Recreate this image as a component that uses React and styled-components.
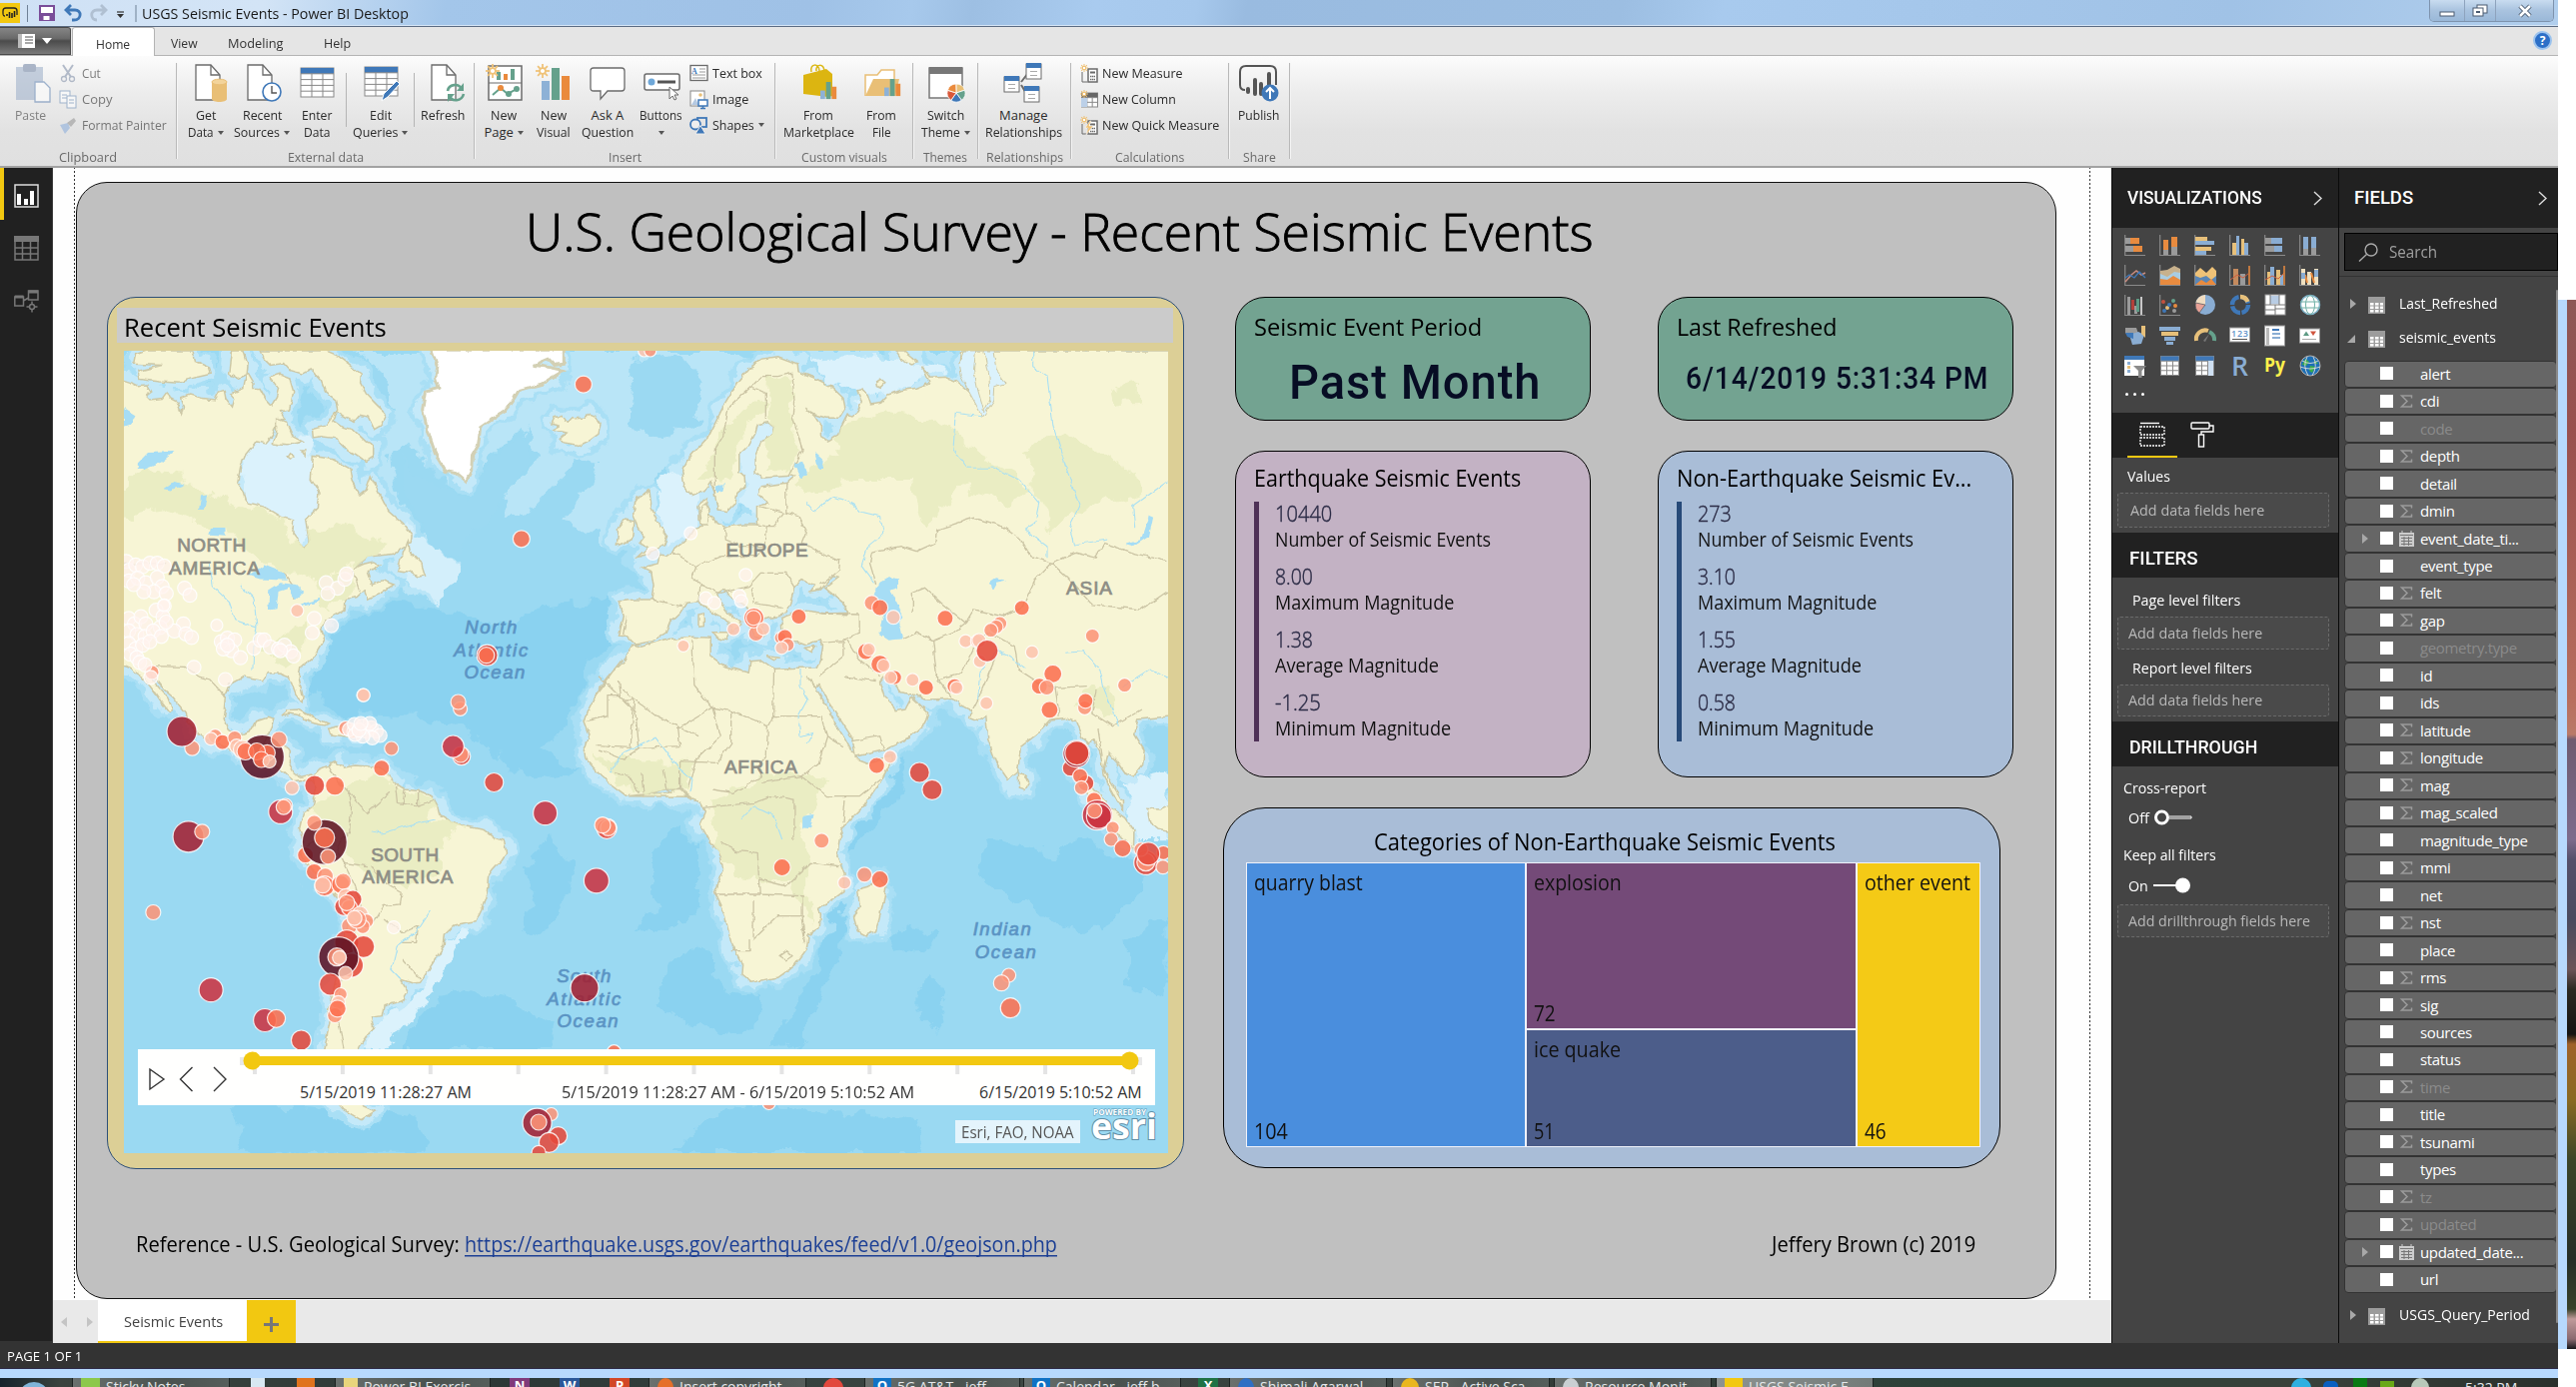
import React, { useLayoutEffect, useRef, useState } from 'react';
import styled, { createGlobalStyle } from 'styled-components';

const UI = '"Open Sans", "Noto Sans", sans-serif';
const DIN = 'Roboto, "Open Sans", sans-serif';

const Global = createGlobalStyle`
  *, *::before, *::after { box-sizing: border-box; }
  body { margin: 0; background: #fff; font-family: ${UI}; color: #222; overflow: hidden; }
  svg { display: block; flex: none; overflow: visible; }
`;

/* ---------- text fitted to a column width ---------- */
const FitBox = styled.span`
  display: block;
  flex: none;
  width: ${p => p.$w}px;
  white-space: nowrap;
`;
const FitInner = styled.span`
  display: inline-block;
  transform-origin: 0 50%;
`;
function Fit({ w, children }) {
  const ref = useRef(null);
  const [k, setK] = useState(1);
  useLayoutEffect(() => {
    if (ref.current && ref.current.offsetWidth) setK(w / ref.current.offsetWidth);
  }, [w]);
  return <FitBox $w={w}><FitInner ref={ref} style={{ transform: `scaleX(${k})` }}>{children}</FitInner></FitBox>;
}

/* ---------- frame ---------- */
const Desktop = styled.div`display: flex; width: 2578px; height: 1388px; background: #fff;`;
const Win = styled.div`display: flex; flex-direction: column; width: 2560px; height: 1388px;`;
const Edge = styled.div`
  width: 18px; height: 1050px; margin-top: 300px; border-left: 9px solid #b7d9fd;
  background: linear-gradient(#8e5856 0, #99504e 130px, #b86e5e 400px, #b97a68 435px, #6f5b70 440px, #7d6c8c 540px, #55506a 560px, #4a4a5e 620px, #6b5458 670px, #2c2a22 690px, #151412 735px, #a0622a 745px, #8a6a22 800px, #3c4628 860px, #262e26 960px, #39422a 1010px, #c09a9a 1020px, #8a6a70 1040px, #15161a 1050px);
`;

/* ---------- title bar ---------- */
const TitleBar = styled.header`
  display: flex; align-items: center; height: 27px; flex: none;
  border-bottom: 1px solid #5b6b82;
  box-shadow: inset 0 -1px 0 #d6e6f7;
  background: linear-gradient(100deg, #cfe1f5 0, #d3e4f6 260px, #a3c6ea 440px, #9fc1e6 800px, #a7c9ec 900px, #9dbfe3 960px, #a9cbef 1080px, #a6c8ec 1180px, #99bbe0 1230px, #9cbee2 1600px, #a8caee 1700px, #a0c2e6 2200px, #b3d0ee 2560px);
  font-size: 15px; color: #1a1a1a;
`;
const Caption = styled.div`display: flex; margin-left: 5px; line-height: 25px;`;
const WinButtons = styled.div`
  display: flex; margin-left: auto; margin-right: 4px; align-self: flex-start; height: 22px;
  border: 1px solid #7e93ad; border-top: 0; border-radius: 0 0 5px 5px; overflow: hidden;
`;
const WinButton = styled.div`
  display: flex; align-items: center; justify-content: center;
  width: ${p => p.$w}px; height: 100%;
  border-left: ${p => (p.$first ? 0 : '1px solid #8ea3bd')};
  background: linear-gradient(#c9dcf0, #a9c3df 50%, #9ab8d8);
`;

/* ---------- tab strip ---------- */
const TabStrip = styled.nav`
  display: flex; height: 29px; flex: none; background: #e5e5e5; border-bottom: 1px solid #b4b4b4; font-size: 13.5px; line-height: 32px; color: #333;
`;
const FileButton = styled.div`
  display: flex; align-items: center; gap: 6px; padding: 0 0 0 17px; width: 71px; height: 28px; border-radius: 0 3px 0 0;
  background: linear-gradient(#858585, #6a6a6a 40%, #4b4b4b 50%, #7a7a7a);
  border: 1px solid #4a4a4a; border-left: 0;
`;
const HomeTab = styled.div`
  width: 83px; height: 30px; margin-left: 1px; padding-left: 23px; background: #fff; border: 1px solid #b4b4b4; border-bottom: 0; border-radius: 3px 3px 0 0;
`;
const Tab = styled.div`margin-left: ${p => p.$ml}px;`;
const HelpDot = styled.div`
  margin: 4px 6px 0 auto; width: 19px; height: 19px; border-radius: 50%; background: #2c6fc7; border: 2px solid #9cc3ee; color: #fff; font: bold 12px/15px ${UI}; text-align: center;
`;

/* ---------- ribbon ---------- */
const Ribbon = styled.section`
  display: flex; height: 112px; flex: none; padding-top: 7px;
  background: linear-gradient(#fcfcfc, #ededed 35px, #e2e2e2 75px, #e0e0e0);
  border-bottom: 2px solid #a2a2a2; font-size: 13px; color: #2b2b2b;
`;
const Group = styled.div`
  display: flex; flex-direction: column; width: ${p => p.$w}px; height: 96px; border-right: 1px solid #b9b9b9; box-shadow: 1px 0 0 #f4f4f4;
`;
const GroupBody = styled.div`display: flex; flex: none; height: 83px; padding-left: ${p => p.$pl || 0}px;`;
const GroupLabel = styled.div`display: flex; justify-content: center; line-height: 22px; color: #6a6a6a;`;
const BigBtn = styled.div`
  display: flex; flex-direction: column; align-items: center; width: ${p => p.$w}px; line-height: 17px; opacity: ${p => (p.$off ? 0.55 : 1)};
`;
const BigIcon = styled.div`display: flex; align-items: center; justify-content: center; width: 40px; height: 40px; margin-bottom: 4px;`;
const Line = styled.div`display: flex; align-items: center; gap: 4px; height: 17px;`;
const Caret = styled.i`border: 3px solid transparent; border-top: 4px solid #555; border-bottom: 0;`;
const Rule = styled.div`width: 1px; height: 54px; margin-top: 10px; background: #b5b5b5;`;
const SmallCol = styled.div`display: flex; flex-direction: column; margin-left: ${p => p.$ml}px;`;
const SmallBtn = styled.div`display: flex; align-items: center; gap: 4px; height: 26px; margin-top: ${p => (p.$first ? '-3px' : 0)}; opacity: ${p => (p.$off ? 0.6 : 1)};`;

/* ---------- workspace ---------- */
const Work = styled.main`display: flex; height: 1176px; flex: none;`;
const NavRail = styled.aside`
  display: flex; flex-direction: column; align-items: center; width: 53px; background: #212121; padding-top: 16px; gap: 28px;
  border-right: 1px solid #3a3a3a; box-shadow: inset 0 -2px 0 #333;
`;
const RailItem = styled.div`
  display: flex; justify-content: center; width: 100%; padding-left: 1px; position: relative;
  &::before { content: ''; display: ${p => (p.$on ? 'block' : 'none')}; position: absolute; left: 0; top: -16px; width: 4px; height: 52px; background: #f2c811; }
`;
const Center = styled.div`display: flex; flex-direction: column; width: 2060px;`;
const Canvas = styled.div`display: flex; height: 1133px; padding-left: 21px; background: #fefefe;`;
const PageGuide = styled.div`
  width: 2018px; height: 1133px; display: flex; align-items: flex-start; padding: 14px 0 0 0.5px;
  border-left: 1px dashed #444; border-right: 1px dashed #444;
  border-image: repeating-linear-gradient(#333 0 2px, transparent 2px 4px) 1;
`;
const Report = styled.div`
  width: 1982px; height: 1118px; background: #c0c0c0; border: 1.5px solid #111; border-radius: 31px; color: #000;
`;
const ReportTitle = styled.h1`margin: 0; padding: 10px 0 0 449px; font-weight: 300; font-size: 51px; line-height: 76px; height: 114px; -webkit-text-stroke: 0.9px #000;`;
const ReportBody = styled.div`display: flex; height: 872px;`;
const MapCard = styled.section`
  width: 1078px; height: 873px; margin-left: 30px; padding: 9.5px; background: #dccf96; border: 1.5px solid #2d4f78; border-radius: 29px;
`;
const MapTitle = styled.div`height: 35px; margin-bottom: 8px; padding-left: 7px; background: #cbcbcb; font-size: 25.5px; line-height: 38px;`;
const MapFrame = styled.div`position: relative; width: 1045px; height: 803px; margin-left: 7px; overflow: hidden;`;
const Player = styled.div`
  position: absolute; left: 14px; top: 699px; width: 1018px; height: 56px; background: #fffffe; font-size: 16px; color: #333;
`;
const PlayerTimes = styled.div`display: flex; padding-left: 162px; margin-top: -24px; line-height: 22px;`;
const Gap = styled.div`width: ${p => p.$w}px; flex: none;`;
const Attribution = styled.div`
  position: absolute; right: 88px; bottom: 10px; width: 125px; height: 23px; padding-left: 6px; background: #e4f4fc; font-size: 15.5px; line-height: 24px; color: #555;
`;
const Credit = styled.div`position: absolute; right: 9px; bottom: 11px; width: 70px; height: 36px;`;
const Side = styled.div`display: flex; flex-direction: column; width: 792px; margin-left: 39px;`;
const CardRow = styled.div`display: flex; gap: 67px; margin-left: 12px; margin-bottom: 30px;`;
const Card = styled.section`
  width: 356px; height: ${p => p.$h}px; background: ${p => p.$bg}; border: 1.3px solid #000; border-radius: 30px; padding: ${p => p.$pt}px 18px 0; overflow: hidden;
`;
const CardTitle = styled.div`font-size: ${p => p.$s}px; line-height: 32px; height: 32px;`;
const CardValue = styled.div`
  display: flex; padding-left: ${p => p.$pl}px; font-family: ${DIN}; font-weight: 500; color: #070d24; font-size: ${p => p.$s}px; line-height: ${p => p.$lh}px; letter-spacing: 1px;
`;
const Stats = styled.div`margin-top: 8px; height: 240px; border-left: 5px solid ${p => p.$c}; padding-left: 16px;`;
const Stat = styled.div`height: 63.1px; &:first-child { margin-top: 0; } position: relative; top: -1px;`;
const StatValue = styled.div`font-size: 21.5px; line-height: 26px; color: #2b2b45; font-weight: 300; -webkit-text-stroke: .4px #2b2b45;`;
const StatLabel = styled.div`font-size: 19.5px; line-height: 26px; color: #111;`;
const TreeCard = styled.section`
  width: 778px; height: 361px; padding: 18px 0 0 22.5px; background: #a9bdd7; border: 1.3px solid #000; border-radius: 42px; font-size: 21.5px;
`;
const TreeTitle = styled.div`padding-left: 128px; height: 36px; line-height: 30px; font-size: 23px;`;
const Tree = styled.div`
  display: grid; width: 735px; height: 285px; grid-template-columns: 278px 329px 1fr; grid-template-rows: 165px 1fr; gap: 2px; padding: 1px; background: #f0f2fa;
`;
const Cell = styled.div`
  display: flex; flex-direction: column; justify-content: space-between; padding: 4px 0 0 7px; background: ${p => p.$c}; grid-row: ${p => (p.$tall ? 'span 2' : 'auto')}; line-height: 30px; color: #111;
`;
const Foot = styled.footer`display: flex; align-items: center; padding: 0 0 0 59px; margin-top: 58px; font-size: 21.5px; line-height: 36px;`;
const Link = styled.a`display: block; color: #1c3f94; background: linear-gradient(#1c3f94, #1c3f94) 0 29px / 100% 1.5px no-repeat;`;
const PageBar = styled.div`display: flex; height: 43px; background: #e9e9e9; font-size: 15px; color: #444;`;
const PageArrows = styled.div`display: flex; align-items: center; gap: 20px; width: 45px; padding-left: 8px;`;
const Tri = styled.i`
  display: block; width: 0; height: 0; border: ${p => p.$s || 5}px solid transparent;
  border-${p => (p.$left ? 'right' : 'left')}: ${p => (p.$s || 5) + 1}px solid ${p => p.$c};
  border-${p => (p.$left ? 'left' : 'right')}: 0;
`;
const PageTab = styled.div`width: 149px; padding-left: 26px; background: #fff; border-bottom: 2px solid #f2c811; line-height: 43px;`;
const AddPage = styled.div`display: flex; align-items: center; justify-content: center; width: 49px; background: #f2c811; padding-top: 5px;`;

/* ---------- side panes ---------- */
const Pane = styled.aside`width: ${p => p.$w}px; background: #444; border-left: 1px solid #0a0a0a; color: #fff; font-size: 15px; overflow: hidden; flex: none;`;
const PaneHead = styled.div`
  display: flex; align-items: center; justify-content: space-between; height: 60px; padding: 0 ${p => p.$pr}px 0 15px; background: #212121; font: 500 18.5px ${DIN};
`;
const SubHead = styled.div`height: 45px; padding: 4px 0 0 17px; background: #212121; font: 500 18.5px/45px ${DIN};`;
const IconGrid = styled.div`display: grid; grid-template-columns: repeat(6, 35px); grid-auto-rows: 30.2px; padding: 7px 0 0 12px; height: 156px;`;
const More = styled.div`display: flex; gap: 5px; padding: 9px 0 0 13px; height: 29px; i { width: 3px; height: 3px; border-radius: 50%; background: #fff; }`;
const WellTabs = styled.div`display: flex; height: 45px; padding-left: 15px; background: #212121;`;
const WellTab = styled.div`display: flex; justify-content: center; padding-top: 9px; width: 50px; border-bottom: 2px solid ${p => (p.$on ? '#f2c811' : 'transparent')};`;
const PaneLabel = styled.div`display: flex; align-items: center; height: ${p => p.$h}px; padding: ${p => p.$pt || 0}px 0 0 ${p => p.$pl}px; gap: 5px;`;
const Well = styled.div`
  width: 212px; height: ${p => p.$h}px; margin: 0 0 ${p => p.$mb || 0}px 5px; padding-left: ${p => p.$pl}px; border: 1px dashed #6a6a6a; border-radius: 3px; background: #4a4a4a; color: #b9b9b9; line-height: ${p => p.$h - 3}px;
`;
const Search = styled.div`display: flex; align-items: center; gap: 11px; height: 38px; margin: 5px 0 5px 5px; padding-left: 14px; background: #212121; border: 1px solid #000; color: #a0a0a0; font-size: 15.5px;`;
const FieldsBody = styled.div`position: relative; border-top: 1px solid #333; height: 1066px; padding-top: 10px;`;
const Thumb = styled.div`position: absolute; right: 0; top: 13px; width: 2px; height: 1034px; border-radius: 1px; background: #8a8a8a;`;
const TableRow = styled.div`display: flex; align-items: center; height: 34px; padding-left: 11px; line-height: 20px; svg { margin: 2px 14px 0 10px; } > span { margin-top: -2px; }`;
const TableArrow = styled.div`width: 8px; display: flex; margin-left: ${p => (p.$open ? '-3px' : 0)}; margin-right: ${p => (p.$open ? '3px' : 0)}; svg { margin: 2px 0 0; }`;
const FieldList = styled.div`margin: 5.5px 0 5px 5px; width: 213px;`;
const Field = styled.div`
  display: flex; align-items: center; height: 27.48px; padding: 0 0 1px 17px; background: #666; border: 1px solid #333; border-radius: 4px; color: ${p => (p.$dim ? '#8b8b8b' : '#fff')}; letter-spacing: -0.35px; line-height: 24px;
`;
const FieldArrow = styled.div`width: 18px;`;
const Box = styled.div`width: 13px; height: 13px; background: #fff;`;
const Kind = styled.div`width: 27px; padding-left: 7px;`;

/* ---------- status + taskbar ---------- */
const Status = styled.div`height: 26px; flex: none; padding-left: 7px; background: #333; border-bottom: 1px solid #2e2a45; color: #fff; font-size: 13.5px; line-height: 26px;`;
const Glass = styled.div`height: 9px; flex: none; background: #b7d9fd;`;
const Taskbar = styled.div`
  display: flex; height: 9px; flex: none; overflow: hidden; align-items: flex-start; color: #e4e8ea; font-size: 14px;
  background: linear-gradient(90deg, #16232c, #3a433e 60px, #2c3836 500px, #3d4844 1000px, #343c38 1500px, #2c4239 2000px, #39423b 2300px, #2a302c);
`;
const Task = styled.div`
  display: flex; gap: 6px; width: ${p => p.$w}px; height: 24px; flex: none; padding-left: 8px; margin-left: ${p => p.$ml || 0}px;
  border: 1px solid ${p => (p.$plain ? 'transparent' : '#1c2321')}; border-top: 0;
  background: ${p => (p.$plain ? 'none' : p.$on ? 'linear-gradient(90deg,#8d9391,#737b78)' : 'linear-gradient(90deg,#6a716e,#4a524f 60%,#565e5b)')};
  line-height: 17px; white-space: nowrap; overflow: hidden;
`;
const Chip = styled.i`
  width: ${p => p.$w || 20}px; height: 20px; margin: ${p => p.$mt || 0}px 0 0 ${p => p.$ml || 0}px; flex: none;
  background: ${p => p.$c}; border-radius: ${p => p.$r || 0}; color: #fff; font: bold 13px/14px ${UI}; text-align: center;
`;

/* ---------- map ---------- */
const TILES = { a: [0, 160, 2.45, 2.8], b: [600, 340, 2.45, 3], c: [100, 660, 2.613, 3], d: [600, 800, 2.45, 3] };
const at = (t, x, y) => [TILES[t][0] + x / TILES[t][2], TILES[t][1] + y / TILES[t][3]];
const pts = (t, s) => s.trim().split(/\s+/).map(p => {
  const [x, y] = p.split(',').map(Number);
  return at(t, x, y).map(v => v.toFixed(1)).join(' ');
});
const shape = (...parts) => 'M' + parts.flatMap(([t, s]) => pts(t, s)).join('L') + 'Z';
const line = (t, s) => 'M' + pts(t, s).join('L');

const LAND = [
  shape(['a', '290,612 306,617 330,626 340,632 362,630 372,650 360,660 370,672 400,668 412,650 420,668 436,678 447,712 452,690 445,668 470,658 500,668 530,672 540,650 552,645 556,668 572,692 578,668 568,655 600,640 607,590 625,625 622,640 640,640 655,672 668,688 680,665 685,640 665,610 690,600 712,610 722,650 712,700 690,705 700,725 680,735 670,775 655,795 630,790 605,825 592,860 585,905 600,930 608,960 650,972 690,1000 722,1010 720,1045 735,1068 748,1088 760,1070 752,1010 780,975 784,930 765,895 770,830 800,835 820,840 860,865 865,900 885,938 900,925 912,885 930,930 955,985 990,1020 1012,1050 1010,1075 965,1105 905,1112 870,1145 895,1132 920,1125 935,1135 905,1155 915,1190 940,1178 968,1190 935,1215 905,1230 898,1205 880,1225 850,1230 848,1260 810,1285 790,1310 798,1345 775,1390 740,1420 735,1450 745,1500 742,1520 728,1500 712,1450 690,1440 660,1438 650,1458 600,1448 565,1470 555,1500 552,1540'],
    ['c', '332,150 327,175 340,210 355,226 378,222 400,212 412,185 440,175 457,180 450,205 442,232 470,250 493,262 500,275 497,310 510,340 530,352 555,345 568,355 565,372 540,360 510,365 490,345 475,330 455,315 430,300 400,290 370,285 330,262 290,245 255,218 233,190 228,162 212,140 195,115 170,90 150,60 137,45 140,62 165,95 180,115 192,150 183,157 165,130 150,105 130,75 112,52 95,40 80,25 50,10']),
  shape(['c', '560,352 575,330 600,318 620,308 640,325 670,318 700,320 735,325 760,350 780,375 800,390 840,395 870,410 885,440 890,465 920,485 960,500 1010,512 1035,535 1060,545 1065,580 1050,605 1030,630 1018,650 1015,700 1000,750 985,785 960,790 930,798 905,825 902,860 885,890 860,935 840,970 820,972 790,960 800,980 808,1000 795,1025 745,1040 740,1070 712,1075 718,1105 690,1150 680,1165 668,1200 640,1250 640,1290 690,1340 722,1356 685,1382 640,1352 610,1310 592,1250 590,1170 598,1120 605,1080 600,1050 612,1000 620,960 630,900 640,850 650,800 650,760 622,715 590,672 565,640 540,610 525,575 535,545 524,510 530,480 535,460 560,440 566,400']),
  shape(['a', '1355,740 1375,745 1360,755 1392,765 1375,782 1385,795 1420,802 1450,785 1470,768 1475,740 1462,718 1450,712 1435,722 1405,725 1395,738 1380,715 1362,722']),
  shape(['a', '640,535 650,558 665,575 700,570 715,590 745,600 765,588 790,620 800,650 825,672 830,700 818,730 840,748 868,755 900,790 918,800 918,832 900,845 875,825 850,810 825,780 790,775 770,778 768,755 800,745 812,725 826,705 870,735 885,715 905,720 920,755 940,742 950,712 925,685 900,655 886,625 888,600 862,575 832,550 800,535']),
  shape(['a', '360,535 335,545 330,572 400,575 340,592 345,615 395,622 440,625 480,610 520,600 515,582 482,565 475,535']),
  shape(['a', '572,535 565,602 585,612 608,600 610,575 600,535']),
  shape(['a', '680,725 705,735 720,775 745,790 705,800 688,798 672,795 680,765']),
  shape(['a', '1003,1068 1008,1098 1035,1128 1045,1165 1025,1168 1008,1155 978,1150 985,1118']),
  shape(['a', '712,820 725,832 715,838 706,830']), shape(['a', '740,812 752,812 748,828']),
  shape(['c', '478,168 495,152 520,150 550,168 600,192 590,198 555,190 525,168 500,162']),
  shape(['c', '600,208 630,200 680,212 685,232 640,230 605,225']),
  shape(['b', '1410,33 888,33 885,70 900,100 908,155 880,125 850,112 815,115 805,95 795,80 812,130 780,145 740,152 710,165 690,190 668,195 660,165 648,150 635,155 645,185 635,215 622,228 610,225 595,262 590,285 565,305 545,290 545,258 530,230 508,205 530,225 560,235 590,235 605,205 600,175 570,140 530,115 490,95 488,72 440,50 400,58 370,85 340,130 310,190 290,240 270,290 240,330 215,365 205,390 210,440 230,470 260,455 275,428 285,460 292,510 315,515 335,490 340,460 360,440 358,410 345,395 345,345 370,315 385,280 390,255 415,248 430,262 425,285 395,310 385,350 385,400 400,415 450,410 480,408 460,430 430,435 400,440 392,465 415,490 400,492 388,500 388,555 355,555 310,562 290,552 278,530 262,525 268,480 258,478 245,500 245,540 255,562 232,570 222,590 210,605 180,635 165,648 150,645 145,672 105,685 130,700 135,740 130,780 90,780 52,785 62,830 50,890 68,888 90,915 130,905 165,880 175,850 200,820 215,790 245,785 262,800 285,825 315,845 328,862 325,880 338,865 352,855 320,822 300,790 290,760 305,748 330,778 365,805 372,830 372,860 385,895 400,900 410,880 400,860 405,840 440,830 458,822 462,810 470,790 480,740 500,722 530,738 520,755 545,750 575,710 588,715 555,745 600,790 612,820 560,822 500,812 470,825 448,835 450,865 462,905 490,905 510,915 545,900 550,920 545,960 535,985 490,985 430,988 400,962 372,965 368,1000 310,980 275,950 275,895 230,892 160,900 105,922 80,915 62,965 30,1005 0,1050'],
    ['c', '1368,0 1330,60 1300,105 1280,150 1270,185 1283,225 1270,270 1275,300 1305,340 1340,375 1380,410 1430,405 1480,390 1520,388 1545,412'],
    ['b', '70,1370 110,1365 170,1360 200,1345 220,1375 250,1390 262,1420 250,1455 275,1510 295,1535'],
    ['d', '300,170 305,210 283,280 310,350 325,430 352,495 350,525 375,550 410,540 440,535 480,500 510,450 515,405 542,385 545,345 540,325 575,298 600,275 603,225 585,170 592,110'],
    ['b', '605,1455 655,1395 690,1330 718,1265 720,1248 660,1270 640,1260 620,1235 605,1200 580,1150 555,1090 530,1040 510,1010 535,1045 540,1035 560,1080 595,1145 622,1195 630,1252 700,1232 760,1198 800,1150 808,1120 780,1085 768,1072 752,1110 728,1115 722,1095 700,1070 690,1030 700,1012 722,1030 740,1058 770,1065 800,1080 870,1078 885,1095 915,1115 910,1135 930,1145 950,1130 955,1200 975,1270 1005,1322 1028,1298 1035,1222 1080,1180 1110,1140 1150,1135 1170,1145 1185,1195 1200,1212 1218,1200 1235,1260 1240,1310 1268,1375 1285,1412 1285,1385 1250,1315 1240,1290 1250,1240 1270,1265 1290,1300 1310,1312 1335,1272 1338,1230 1315,1185 1322,1140 1365,1135 1410,1130']),
  shape(['b', '98,475 125,450 130,505 150,560 168,590 160,618 125,640 92,655 120,625 100,612 112,592 95,560 85,520 90,490']),
  shape(['b', '48,565 65,540 88,545 85,598 45,618']),
  shape(['b', '728,33 740,55 765,72 782,66 755,40 750,33']),
  shape(['b', '680,125 692,115 705,128 692,145 682,140']),
  shape(['b', '1030,1300 1045,1305 1055,1330 1045,1350 1030,1345']),
  shape(['b', '280,878 320,878 312,902 290,895']), shape(['b', '245,825 258,822 258,860 245,862']),
  shape(['b', '505,925 530,920 520,938']), shape(['b', '412,950 445,955 430,962']),
  shape(['b', '1178,1312 1205,1330 1250,1400 1290,1435 1313,1475 1312,1530 1285,1500 1240,1440 1200,1370']),
  shape(['b', '1410,1390 1375,1410 1345,1408 1352,1450 1372,1470 1410,1480']),
  shape(['d', '636,270 660,262 690,235 705,265 700,300 680,395 655,408 635,395 626,355 640,320']),
  shape(['b', '247,520 262,490 272,510 268,555 250,555'])
];
const ICE = shape(['a', '1060,530 1075,580 1070,610 1078,640 1045,650 1038,700 1048,745 1060,790 1072,830 1095,872 1120,878 1145,902 1158,870 1160,830 1175,800 1180,750 1215,722 1240,705 1265,665 1275,645 1330,628 1385,590 1335,578 1310,575 1345,558 1360,575 1385,572 1385,530']);
const WATER = [
  shape(['b', '672,768 690,728 715,712 735,718 735,745 714,752 728,780 748,830 738,860 745,898 712,902 690,885 692,855 702,820 685,790']),
  shape(['b', '888,60 915,200 942,232 955,205 972,170 970,130 950,60 945,33 895,33']),
  shape(['b', '480,370 500,365 512,405 498,420']), shape(['b', '530,338 550,360 550,390 540,390']),
  shape(['b', '500,1430 528,1425 520,1468 500,1465']),
  shape(['b', '1290,615 1330,600 1350,525 1360,530 1350,590 1310,622']),
  shape(['b', '958,730 975,715 1000,722 975,728 965,750']),
  shape(['b', '288,440 308,432 305,455 290,460']),
  shape(['a', '612,1165 650,1135 700,1158 705,1178 640,1175']),
  shape(['a', '660,1262 662,1205 690,1185 728,1190 748,1212 728,1232 712,1200 685,1210 680,1258']),
  shape(['a', '740,1245 790,1228 785,1238 745,1250']),
  shape(['a', '340,850 365,820 430,818 395,850 355,868 340,868']),
  shape(['a', '405,922 430,902 455,910 420,925']), shape(['a', '495,945 510,942 502,980 490,980']),
  shape(['a', '306,695 335,715 325,740 306,748']), shape(['a', '520,1030 555,1030 555,1055 515,1052'])
];
const OB_GULF = shape(['b', '908,155 890,110 885,70 895,33 925,33 920,90 930,150 945,215 960,180 958,110 945,33 968,33 975,90 1000,130 972,140 970,180 942,232']);
const DEEP = [
  shape(['a', '790,1390 830,1320 900,1270 980,1240 1060,1245 1180,1290 1270,1300 1320,1260 1420,1240 1500,1220 1530,1290 1500,1370 1430,1400 1440,1470 1400,1540 1290,1568 1130,1568 980,1560 830,1550 760,1480']),
  shape(['c', '720,0 1180,0 1240,100 1220,200 1160,280 1260,330 1180,360 1080,340 1000,250 900,190 770,150 640,150 560,100 600,20']),
  shape(['c', '1110,620 1180,540 1240,600 1220,720 1160,820 1100,800 1140,700']),
  shape(['c', '1440,580 1520,510 1568,560 1568,760 1480,800 1440,700']),
  shape(['c', '820,1100 880,1020 960,990 1060,1010 1180,1100 1180,1170 800,1170']),
  shape(['c', '350,1345 520,1340 820,1370 880,1440 860,1481 380,1481']),
  shape(['b', '700,1280 760,1250 730,1400 640,1500 600,1560 590,1500']),
  shape(['d', '950,120 1060,140 1120,180 1180,110 1340,220 1300,330 1200,400 1120,370 1000,290 940,230']),
  shape(['d', '150,170 200,100 240,170 230,300 170,400 90,390 150,320']),
  shape(['d', '200,450 260,440 300,560 400,600 390,690 300,700 140,630']),
  shape(['d', '780,580 820,540 860,620 830,710 780,640']),
  shape(['d', '700,420 740,380 830,400 800,460 720,470']),
  shape(['d', '560,260 610,300 600,450 540,620 500,730 420,740 540,500']),
  shape(['d', '250,980 330,920 500,930 780,960 810,1062 180,1062']),
  shape(['d', '1290,420 1395,350 1395,590 1300,560'])
];
const BASIN = [
  shape(['b', '85,60 210,40 260,140 240,240 130,300 80,250']),
  shape(['a', '985,830 1050,900 1150,940 1200,850 1300,750 1290,850 1210,990 1130,1110 1060,1080 1000,950']),
  shape(['a', '880,560 960,600 960,680 930,640'])
];
const SHELF = [
  shape(['a', '880,535 1560,535 1568,800 1500,1000 1440,1040 1380,1010 1480,860 1420,840 1320,960 1250,1000 1240,940 1330,820 1280,760 1190,850 1150,920 1100,910 1000,800 960,830 980,960 1060,1080 1140,1140 1080,1240 1020,1220 980,1190 930,1000 900,850 980,700']),
  shape(['b', '0,33 330,33 400,60 280,230 200,380 120,420 60,500 20,640 0,600']),
  shape(['b', '430,33 890,33 900,130 700,170 600,240 500,90']),
  shape(['a', '560,535 660,535 700,700 560,690']), shape(['a', '306,535 360,535 420,690 306,610'])
];
const FOREST = [
  shape(['a', '306,870 420,880 560,960 700,1010 720,1070 800,1010 950,1070 900,1120 780,1180 640,1120 560,1040 420,980 306,1000']),
  shape(['a', '770,1180 860,1150 870,1210 800,1260']), shape(['a', '640,1370 760,1290 750,1380 700,1420']),
  shape(['b', '560,260 700,220 860,260 950,350 1060,440 1000,490 880,440 800,580 770,420 620,420 500,470 470,440 590,340']),
  shape(['b', '1040,340 1120,280 1200,310 1320,400 1330,470 1200,500 1110,580 1080,480']),
  shape(['b', '1250,150 1330,130 1330,190 1260,200']), shape(['b', '420,110 470,120 480,380 420,400 400,340']),
  shape(['b', '300,280 380,180 410,190 350,300 330,400 290,420 240,420']),
  shape(['b', '270,1390 420,1300 560,1320 500,1450 440,1560 300,1560']), shape(['d', '300,0 460,0 520,180 520,380 460,250 320,230']),
  shape(['c', '560,440 720,340 880,420 870,480 960,500 900,540 880,640 800,700 720,660 620,560']),
  shape(['b', '1190,1060 1250,1040 1270,1120 1180,1100']), shape(['c', '1290,290 1400,300 1560,310 1540,390 1390,400'])
];
const BORDERS = [
  line('b', '285,470 285,330 305,290 320,200 375,140 410,160 410,240'), line('b', '375,140 400,110 440,110 475,100 480,180 475,230 500,330 465,410'),
  line('b', '460,430 460,520 490,530 510,580 500,610 560,650 592,660 590,690 545,735'), line('b', '388,555 412,560 410,620 385,650 300,650 240,680 230,710 250,735 300,760 370,740 400,700 460,700 480,740'),
  line('b', '310,562 312,600 350,620 410,620'), line('b', '395,500 455,520 430,560 412,560'), line('b', '665,670 670,640 740,620 780,635 825,610 830,570 920,535 990,560 1035,600 1060,650 1110,670 1070,720 1040,800 990,830 920,810 900,850'),
  line('b', '1110,670 1150,715 1210,795 1330,810 1395,755'), line('b', '1110,670 1170,640 1220,655 1240,610 1310,640 1395,665'), line('b', '665,670 675,710 680,735'),
  line('b', '770,820 770,760 800,745 840,790 900,850 870,880 820,905 780,880 745,900'), line('b', '820,905 830,1020 870,1078'), line('b', '830,1020 890,1000 930,900 960,880 1020,920 1030,990 1080,1030 1120,1045 1200,1040'),
  line('b', '975,950 930,1080 915,1115'), line('b', '600,905 545,910'), line('b', '610,900 640,960 690,1010'), line('b', '540,1010 600,950 600,900'), line('b', '600,1010 680,1025'),
  line('b', '130,780 205,800'), line('b', '70,830 60,885'), line('b', '180,635 240,680'), line('b', '250,735 245,785'), line('b', '375,745 380,790 450,805'), line('b', '545,822 640,825 640,880 600,900'),
  line('b', '430,988 428,1130 545,1130'), line('b', '428,1130 415,1160 325,1115 280,1105 195,1168 200,1220 100,1225 90,1115 0,1010'), line('b', '280,1105 235,1040 230,900'), line('b', '325,1115 325,1210 290,1270 200,1265'),
  line('b', '415,1160 412,1250 390,1280 400,1310 330,1360 280,1350'), line('b', '545,1130 560,1190 540,1270 500,1310 400,1330'), line('b', '100,1225 60,1260 0,1230'), line('b', '620,1205 690,1190 700,1230'), line('b', '560,1190 600,1220'),
  line('b', '500,1310 560,1370 640,1370 690,1320'), line('b', '605,1380 600,1450'), line('b', '255,1405 300,1400 380,1390 430,1370 480,1380 480,1500'), line('b', '1120,1045 1130,1130'), line('b', '1220,1050 1210,1120 1260,1160 1330,1110'), line('b', '1225,1170 1235,1250'),
  line('b', '40,1300 75,1310 100,1360'), line('b', '105,1300 110,1360'), line('b', '160,1290 170,1360'), line('b', '200,1265 200,1345'), line('b', '280,1105 300,1190 240,1260 220,1340'),
  line('d', '300,130 340,155 390,160 395,285 283,285'), line('d', '395,285 500,290 500,350 440,350 380,420 380,300'), line('d', '370,420 370,455 325,455'), line('d', '500,350 505,430 495,360'), line('d', '445,470 462,455 475,470 460,482 445,470'), line('d', '395,240 460,260 520,190 590,200'),
  line('c', '1300,260 1390,265 1400,120 1370,120'), line('c', '1370,90 1460,170 1568,230'), line('c', '1360,60 1365,110 1330,110 1330,170 1275,185'),
  line('c', '600,315 620,360 655,400 660,440 655,520 620,560 640,610 700,620'), line('c', '655,400 700,460 720,440 760,400'), line('c', '775,375 780,430 830,440 880,420'), line('c', '800,390 795,435'), line('c', '835,395 835,440'), line('c', '525,575 570,540'), line('c', '640,610 670,680 690,760 720,790 745,740 785,735 790,700 760,680 710,620'), line('c', '650,760 670,820 650,900 630,980 625,1080 640,1165'), line('c', '745,780 795,820 835,800 830,850 795,850'), line('c', '795,900 840,960'),
  line('c', '140,20 225,22 260,50 290,60 330,110'), line('a', '306,1132 410,1130'), line('a', '700,1160 725,1200 725,1230'), line('a', '868,1150 885,1210'), line('c', '440,225 430,260 460,265')
];
const RIVERS = [
  line('b', '1065,33 1065,80 1100,110 1115,260 1150,400 1180,500 1155,560 1165,615 1250,600'), line('b', '940,230 875,220 870,330 905,385 970,385 1030,420 1080,490 1070,550 1045,570 1100,620 1100,655'),
  line('b', '510,490 530,515 575,470 620,490 640,515 690,530 700,580 660,620 645,680 675,730'), line('b', '495,990 495,1040 512,1080 490,1130 495,1190 525,1180 510,1215'), line('b', '1395,425 1310,500 1315,565'),
  line('a', '515,1130 525,1195 565,1240 580,1290 632,1310 625,1350 622,1430'), line('a', '632,1310 625,1230 590,1190'), line('b', '30,1300 60,1240 140,1195 200,1290 230,1320 225,1360'), line('c', '712,515 740,522 800,500 880,480'), line('c', '870,750 830,820 780,860 765,930 790,960'), line('d', '350,60 380,20 430,50 450,120'),
  line('b', '1145,940 1190,935 1230,990 1240,1050 1260,1110 1275,1160'), line('b', '1285,1040 1350,990 1395,1015'), line('b', '930,1080 935,1000 980,930 1045,985')
];

const HUES = ['#fff3ee', '#fdc3ad', '#fc9477', '#fb6f4f', '#e5483b', '#cb3340', '#a31f30', '#5d1123'];
const q = (t, s) => s.split(';').map(r => { const [x, y, rad, h] = r.split(',').map(Number); return [...at(t, x, y), rad, HUES[h]]; });
const pale = (t, s) => s.split(' ').map(r => { const [x, y] = r.split(',').map(Number); return [...at(t, x, y), 7, HUES[0]]; });
const QUAKES = [
  ...pale('a', '312,1125 318,1150 335,1135 352,1140 370,1130 388,1130 405,1138 318,1180 340,1172 360,1185 388,1170 400,1195 380,1210 355,1210 330,1190 410,1215 405,1250 385,1262 402,1280 395,1310 318,1285 332,1300 348,1280 360,1300 318,1320 338,1330 358,1335 378,1320 398,1335 318,1355 335,1370 352,1360 370,1350 322,1385 338,1395 455,1200 468,1220 452,1300 430,1320 410,1295 458,1328 472,1338 478,1422 555,1456 545,1350 560,1340 578,1345 570,1375 592,1395 550,1370 625,1368 640,1345 650,1345 665,1365 685,1370 700,1360 715,1378 722,1390 690,1375 768,1325 773,1285 815,1305 802,1185 830,1200 848,1175 806,1215 852,1160'),
  ...q('a', '404,1248,6,0;534,1304,6,0;560,1360,7,0;731,1263,6.5,1;375,1436,7,2;1433,629,8.5,3;1281,1062,8.5,3;1197,1388,10.5,4;1195,1388,8,3;893,1500,6.5,1;1131,1538,7,2;1126,1519,7.5,2'),
  ...pale('a', '345,1408 358,1415 372,1450'),
  ...q('b', '112,33,6,1;127,33,6,2;226,581,6.5,0;133,642,6.5,0;361,706,6.5,0;263,776,6.5,0;284,790,6.5,0;345,769,6.5,0;350,785,6.5,0;331,869,6.5,1;208,919,6,1;386,882,7.5,2;381,835,10,3;380,835,7.5,2;404,868,6.5,1;491,831,7.5,3;446,895,6,2;457,892,7.5,3;464,916,6.5,2;449,925,6.5,1;670,790,7.5,2;690,804,8,3;723,833,7,1;850,836,8,3;1038,805,7.5,3;984,852,7,2;975,862,7,2;962,872,7,2;900,905,6.5,1;928,905,6.5,1;933,903,7,1;935,965,6.5,1;953,934,11,4;1063,938,6.5,1;1211,889,7,2;1290,1037,7,2;1114,1003,9,3;1081,1040,8,3;1099,1044,7.5,2;1106,1111,8.5,3;1192,1105,7,2;1194,1084,7.5,3;951,1091,6.5,1;655,936,8,3;663,930,6.5,1;690,974,9,3;699,978,6.5,1;726,1014,7,3;716,1014,6.5,1;770,1021,6.5,1;803,1044,7.5,3;873,1040,7.5,3;878,1045,6.5,1;682,1278,8,3;715,1252,6.5,1;787,1299,10,4;818,1351,10,4;1195,1331,8,4;1157,1286,8,4;1172,1243,13.5,6;1173,1241,12,4;1181,1310,7.5,3;1184,1345,7,2;1215,1381,7.5,3;1223,1427,15,5;1227,1430,12.5,5;1216,1414,7.5,2;1261,1465,6.5,2;1257,1500,7,2;1285,1527,8.5,3;22,1465,9,3;10,1457,7.5,2;547,1504,7.5,2'),
  ...q('d', '450,204,8.5,3;603,250,6.5,1;652,226,7.5,2;690,240,8.5,3;1342,190,12,4;1342,188,9,2;1385,160,7,3;1384,203,7,2;1330,150,7,2;1348,163,11.5,4;1006,528,7,2;988,551,8,2;1010,626,10,3;38,758,7,3;418,912,6.5,2'),
  ...q('c', '645,206,7,2;665,216,6.5,1;244,266,7.5,2;217,216,15,6;304,230,7,2;293,238,6.5,1;323,248,7.5,3;355,235,7,2;360,260,7,1;427,292,22,7;375,270,9,1;383,276,8.5,3;440,280,8,3;413,276,8.5,3;425,300,8,3;446,306,6.5,1;471,240,8,2;692,107,6.5,1;765,267,7,2;739,326,8,3;564,378,10,4;617,379,9.5,3;505,385,7,1;475,457,12,5;488,438,7,2;483,443,7.5,2;234,532,15.5,6;270,517,7.5,2;142,759,7.5,2;293,992,12,5;434,1083,11.5,5;464,1078,9,3;529,1143,10,4;948,290,9,4;946,285,8,2;926,261,11,5;1033,369,9.5,4;1167,461,12,5;1301,664,12.5,5;1328,508,10,4;1332,505,8,2;1317,497,8,2;1270,986,14,6;540,587,8,3;590,548,22.5,7;563,490,7.5,2;590,535,10,3;599,592,7.5,2;563,637,8,3;592,650,8,2;590,680,10,3;585,677,8,1;632,675,9,3;639,666,8,2;646,712,8,1;664,720,9,4;640,742,9,4;655,745,8,3;648,730,8,2;683,765,8,1;700,785,7,2;655,800,8,2;690,802,7,2;675,780,9,2;668,776,7.5,1;648,848,12,4;692,862,11,4;660,918,12,4;627,893,20,7;622,893,9,2;629,895,7,1;645,942,7,1;605,975,11,4;632,1005,6.5,2;626,1030,7,1;617,1068,7.5,2;624,1048,8.5,3;1183,1365,6.5,2;1201,1430,9,4;1146,1391,14.5,6;1150,1389,8,2;1177,1450,10,4;1150,1480,7,4;771,804,6.5,0'),
  ...pale('c', '655,210 668,195 690,200 700,215 712,205 725,215 735,228 715,235 690,230 670,225 708,192 680,212 685,192'),
];
const LABELS = [
  ['a', 521, 1098, 'NORTH', 69], ['a', 528, 1162, 'AMERICA', 91], ['b', 413, 651, 'EUROPE', 82], ['b', 1203, 766, 'ASIA', 46], ['b', 398, 1301, 'AFRICA', 73], ['c', 800, 605, 'SOUTH', 68], ['c', 807, 673, 'AMERICA', 91]
];
const SEAS = [
  ['a', 1206, 1327, 'North', 52], ['a', 1206, 1391, 'Atlantic', 74], ['a', 1215, 1453, 'Ocean', 61],
  ['c', 1268, 969, 'South', 54], ['c', 1268, 1038, 'Atlantic', 74], ['c', 1278, 1105, 'Ocean', 61],
  ['d', 989, 407, 'Indian', 58], ['d', 998, 476, 'Ocean', 61]
];
const MapLabel = styled.text`
  font: ${p => (p.$sea ? 'italic 400 18.5px' : '400 19px')} "Liberation Sans", Arial, sans-serif;
  fill: ${p => (p.$sea ? '#5b94c4' : '#8e8e86')}; stroke: ${p => (p.$sea ? '#5b94c4' : '#8e8e86')}; stroke-width: .7px;
  text-anchor: middle;
`;

function WorldMap() {
  return (
    <svg width="1045" height="803" viewBox="125 351 1045 803">
      <defs>
        <clipPath id="landClip"><path d={LAND.join('')} /></clipPath>
        <filter id="rough" x="-5%" y="-5%" width="110%" height="110%">
          <feTurbulence type="fractalNoise" baseFrequency="0.05" numOctaves="4" seed="4" />
          <feDisplacementMap in="SourceGraphic" scale="22" xChannelSelector="R" yChannelSelector="G" />
        </filter>
        <filter id="coast" x="-2%" y="-2%" width="104%" height="104%">
          <feTurbulence type="fractalNoise" baseFrequency="0.12" numOctaves="2" seed="9" />
          <feDisplacementMap in="SourceGraphic" scale="5" xChannelSelector="R" yChannelSelector="G" />
        </filter>
      </defs>
      <rect x="125" y="351" width="1045" height="803" fill="#9ad9f2" />
      <g filter="url(#rough)">
        <path d={SHELF.join('')} fill="#b9e5f7" />
        <path d={BASIN.join('')} fill="#9bd9f2" />
        <path d={DEEP.join('')} fill="#8ad2f0" />
        <path d={LAND.join('') + ICE} fill="none" stroke="#a9dff5" strokeWidth="22" strokeLinejoin="round" />
        <path d={LAND.join('') + ICE} fill="none" stroke="#c4e9f9" strokeWidth="12" strokeLinejoin="round" />
        <path d={shape(['a', '590,780 760,780 790,960 750,1080 600,960']) + shape(['b', '140,420 210,400 250,480 240,570 170,620']) + shape(['b', '510,60 700,50 860,90 640,180'])} fill="#dbf2fc" />
        <path d={shape(['b', '1290,1330 1395,1300 1395,1500 1320,1500']) + shape(['c', '745,1170 700,1165 720,1100 830,1010 900,860 960,800 900,960 790,1110'])} fill="#dbf2fc" />
        <path d={shape(['b', '350,250 430,260 480,420 390,530 350,500']) + shape(['a', '990,1020 1060,1080 1140,1150 1080,1240 1000,1180'])} fill="#d3effb" />
      </g>
      <g filter="url(#coast)">
        {LAND.map((d, i) => <path key={i} d={d} fill="#f7f5d5" stroke="#cdc8a6" strokeWidth="1.5" />)}
        <path d={ICE} fill="#fff" stroke="#d3d0b4" strokeWidth="3" />
      </g>
      <g clipPath="url(#landClip)">
        <path d={FOREST.join('')} fill="#e8ecc0" opacity=".85" filter="url(#rough)" />
      </g>
      <path d={BORDERS.join('')} fill="none" stroke="#cbc4a4" strokeWidth="1.3" filter="url(#coast)" />
      <path d={RIVERS.join('')} fill="none" stroke="#a9e0f3" strokeWidth="1.1" filter="url(#coast)" />
      <path d={WATER.filter((_, i) => i !== 1).join('')} fill="#a6ddf5" filter="url(#coast)" />
      <path d={OB_GULF} fill="#dbf2fc" stroke="#cdc8a6" strokeWidth="1" filter="url(#coast)" />
      {LABELS.map(([t, x, y, s, w], i) => { const [a, b] = at(t, x, y); return <MapLabel key={i} x={a} y={b} textLength={w}>{s}</MapLabel>; })}
      {SEAS.map(([t, x, y, s, w], i) => { const [a, b] = at(t, x, y); return <MapLabel key={i} $sea x={a} y={b} textLength={w}>{s}</MapLabel>; })}
      {QUAKES.map(([x, y, r, c], i) => <circle key={i} cx={x} cy={y} r={r} fill={c} fillOpacity={c === HUES[0] ? 0.72 : 0.87} stroke="#fff" strokeOpacity=".85" strokeWidth="1.2" />)}
    </svg>
  );
}

function Esri() {
  return (
    <Credit>
      <svg width="70" height="36" viewBox="0 0 70 36">
        <text x="4" y="9" fontFamily="Open Sans" fontWeight="700" fontSize="8.5" textLength="53" lengthAdjust="spacingAndGlyphs" fill="#fff" stroke="#5a9ab8" strokeWidth="1" paintOrder="stroke">POWERED BY</text>
        <text x="2" y="33" fontFamily="Open Sans" fontWeight="700" fontSize="36" textLength="66" lengthAdjust="spacingAndGlyphs" fill="#fff" stroke="#5f8ea6" strokeWidth="2" paintOrder="stroke">esri</text>
      </svg>
    </Credit>
  );
}

function Slider() {
  const x0 = 116;
  return (
    <svg width="1018" height="56" viewBox="0 0 1018 56">
      {Array.from({ length: 11 }, (_, i) => <rect key={i} x={x0 - 1 + i * 87.9} y="16" width="4" height="9" fill="#e4e4e4" />)}
      <rect x="102" y="8" width="903" height="8" fill="#e8e8e8" />
      <rect x={x0 - 2} y="7" width="878" height="9" fill="#f2c811" />
      <circle cx={x0 - 1.5} cy="11.5" r="9" fill="#f2c811" /><circle cx={x0 + 876.5} cy="11.5" r="9" fill="#f2c811" />
      <g fill="none" stroke="#333" strokeWidth="1.4"><path d="M12 20L26 30L12 40Z" /><path d="M54.500 18L42.500 30L54.500 42" /><path d="M76 18L88 30L76 42" /></g>
    </svg>
  );
}

/* ---------- ribbon icons ---------- */
const G = '#6b6b6b';
const Svg = ({ w = 40, h = 40, children }) => <svg width={w} height={h} viewBox={`0 0 ${w} ${h}`} fill="none">{children}</svg>;
const Page = ({ x = 9 }) => <><path d={`M${x} 2H${x + 15}L${x + 24} 12V37H${x}Z`} fill="#fff" stroke={G} strokeWidth="1.3" /><path d={`M${x + 15} 2V12H${x + 24}`} stroke={G} strokeWidth="1.3" /></>;
const Sun = ({ x = 9, y = 8, r = 7 }) => <g stroke="#efc277" strokeWidth={r / 4}>{[0, 45, 90, 135].map(a => <path key={a} transform={`rotate(${a} ${x} ${y})`} d={`M${x - r} ${y}H${x + r}`} />)}<circle cx={x} cy={y} r={r / 2.4} fill="#fff" /></g>;
const Bars = ({ x, y, s = 1 }) => <><rect x={x} y={y + 9 * s} width={5 * s} height={9 * s} fill="#8db1d6" /><rect x={x + 6 * s} y={y} width={5 * s} height={18 * s} fill="#65a18c" /><rect x={x + 12 * s} y={y + 5 * s} width={5 * s} height={13 * s} fill="#ea8a3c" /></>;
const Grid = ({ x, y, w, h, c = '#3f78b8', rows = 4, cols = 3 }) => (
  <g><rect x={x} y={y} width={w} height={h} fill="#fff" stroke="#888" /><rect x={x} y={y} width={w} height={h / (rows + 1)} fill={c} />
    {Array.from({ length: rows }, (_, i) => <path key={i} d={`M${x} ${y + (h * (i + 1)) / (rows + 1)}h${w}`} stroke="#888" />)}
    {Array.from({ length: cols - 1 }, (_, i) => <path key={'c' + i} d={`M${x + (w * (i + 1)) / cols} ${y + h / (rows + 1)}V${y + h}`} stroke="#888" />)}</g>
);
const ICONS = {
  paste: <Svg><g transform="translate(1 0)"><rect x="5" y="4" width="27" height="33" fill="#9aadc8" /><rect x="12" y="1" width="13" height="8" rx="2" fill="#6c7fa0" /><path d="M24 19H33L39 25V39H24Z" fill="#fff" stroke="#5b7fb0" strokeWidth="1.300" /></g></Svg>,
  get: <Svg><g transform="translate(4 0)"><Page x={6} /><path d="M22 19V36C22 40 37 40 37 36V19Z" fill="#e9bf76" /><ellipse cx="29.500" cy="19" rx="7.500" ry="2.800" fill="#f3d49b" stroke="#e9bf76" /></g></Svg>,
  recent: <Svg><g transform="translate(4 0)"><Page x={2} /><circle cx="26" cy="29" r="9" fill="#fff" stroke="#3f78b8" strokeWidth="1.600" /><path d="M26 23V30H31" stroke="#555" strokeWidth="1.400" /></g></Svg>,
  enter: <Svg><Grid x={4} y={5} w={33} h={29} /></Svg>,
  edit: <Svg><Grid x={4} y={4} w={33} h={29} /><path d="M21 38L23 31L36 18L39 21L27 34Z" fill="#3f78b8" stroke="#fff" /></Svg>,
  refresh: <Svg><g transform="translate(3 0)"><Page x={6} /><g stroke="#65a18c" strokeWidth="2.600"><path d="M22 28C23 21 33 20 36 26" /><path d="M38 31C36 39 26 39 24 33" /></g><path d="M38 20V28H31ZM22 39V31H29Z" fill="#65a18c" /></g></Svg>,
  newpage: <Svg><rect x="5" y="3" width="33" height="34" fill="#fff" stroke={G} strokeWidth="1.500" /><path d="M5 20H38" stroke={G} /><rect x="13" y="9" width="4" height="8" fill="#65a18c" /><rect x="20" y="11" width="4" height="6" fill="#ea8a3c" /><rect x="27" y="6" width="4" height="11" fill="#65a18c" /><path d="M9 32L17 25L24 31L33 26" stroke="#65a18c" strokeWidth="2" /><circle cx="17" cy="25" r="3" fill="#ea8a3c" /><circle cx="25" cy="31" r="3" fill="#65a18c" /><circle cx="33" cy="26" r="3" fill="#65a18c" /><Sun /></Svg>,
  newvis: <Svg><rect x="8" y="18" width="8" height="19" fill="#8db1d6" /><rect x="18" y="5" width="8" height="32" fill="#65a18c" /><rect x="28" y="13" width="8" height="24" fill="#ea8a3c" /><Sun /></Svg>,
  ask: <Svg><path d="M6 5H34C36 5 37 6 37 8V25C37 27 36 28 34 28H20L13 36V28H6C4 28 3 27 3 25V8C3 6 4 5 6 5Z" fill="#fff" stroke={G} strokeWidth="1.300" /></Svg>,
  buttons: <Svg><rect x="3" y="11" width="35" height="16" rx="2" fill="#fff" stroke={G} strokeWidth="1.500" /><circle cx="10" cy="19" r="3.500" fill="#6ea7d8" /><path d="M16 19H34" stroke="#555" strokeWidth="3" /><path d="M28 24V36L31 33L33 37L35 36L33 32H37Z" fill="#fff" stroke={G} /></Svg>,
  market: <Svg><path d="M13 9C11 0 21 0 21 8M18 8C17 1 25 0 26 8" stroke="#dcb917" strokeWidth="1.500" /><path d="M5 12L28 6L34 11V33L30 34L5 31Z" fill="#dcb511" /><Bars x={22} y={19} s={0.95} /></Svg>,
  file: <Svg><path d="M4 33V12H16L20 7H33V16" fill="#fff" stroke="#e9bf76" strokeWidth="1.500" /><path d="M4 33L12 16H38L34 33Z" fill="#e9bf76" /><Bars x={23} y={16} s={0.95} /></Svg>,
  theme: <Svg><rect x="4" y="5" width="33" height="30" fill="#fff" stroke="#777" strokeWidth="1.500" /><rect x="4" y="4" width="33" height="7" fill="#777" />{['#e9bf76', '#65a18c', '#3f78b8', '#d9583a', '#ea8a3c'].map((c, i) => <path key={c} d="M31 30L31 21A9 9 0 0 1 39.500 27Z" fill={c} stroke="#fff" strokeWidth=".7" transform={`rotate(${i * 72} 31 30)`} />)}</Svg>,
  manage: <Svg><path d="M18 19L25 10M18 22L24 32" stroke={G} strokeWidth="2" />{[[23, 0], [1, 13], [21, 23]].map(([x, y]) => <g key={x}><rect x={x} y={y + 1} width="15" height="15" fill="#fff" stroke={G} /><rect x={x} y={y} width="15" height="5" fill="#3f78b8" /><path d={`M${x + 4} ${y + 8.500}h7m-7 4h7`} stroke="#aaa" /></g>)}</Svg>,
  publish: <Svg><path d="M7 27C4 27 2 25 2 22V9C2 5 4 3 8 3H32C36 3 38 5 38 9V22" stroke="#555" strokeWidth="2" /><path d="M10 26V29M17 17V31M23 21V31M31 11V24" stroke="#555" strokeWidth="4" strokeLinecap="round" /><circle cx="32" cy="30" r="8.500" fill="#3f78b8" /><path d="M32 36V25M28 29L32 25L36 29" stroke="#fff" strokeWidth="2" /></Svg>,
};
const s18 = c => <Svg w={19} h={19}>{c}</Svg>;
const Calc = <><path d="M3 8V18H8" stroke={G} /><rect x="9" y="5" width="9" height="13" fill="#fff" stroke={G} strokeWidth="1.500" /><path d="M11 8.500H16" stroke={G} strokeWidth="2" /><path d="M11 12.500H16M11 15.500H16" stroke={G} strokeWidth="1.600" strokeDasharray="1.500 .5" /><Sun x={5} y={4} r={4} /></>;
const SMALL = {
  cut: s18(<><path d="M4 1L12 13M14 1L6 13" stroke="#8593ab" strokeWidth="2" /><circle cx="5" cy="15" r="2.500" stroke="#8593ab" strokeWidth="1.300" /><circle cx="13" cy="15" r="2.500" stroke="#8593ab" strokeWidth="1.300" /></>),
  copy: s18(<><rect x="1" y="1" width="10" height="12" fill="#fff" stroke="#6f8fb8" /><path d="M3 5h5m-5 3h5" stroke="#6f8fb8" /><rect x="8" y="6" width="9" height="12" fill="#fff" stroke="#6f8fb8" /><path d="M10 10h5m-5 3h5" stroke="#6f8fb8" /></>),
  paint: s18(<><path d="M1 9L9 7L11 12L6 18Z" fill="#8fb0dc" /><path d="M8 7L15 2L17 5L12 11Z" fill="#9a9a9a" /></>),
  text: s18(<><rect x="1" y="1.500" width="17" height="15" fill="#fff" stroke={G} strokeWidth="1.300" /><path d="M10 5h6m-6 3h6M3 11h13m-13 3h13" stroke="#999" /><text x="2" y="9.500" fontSize="8" fontWeight="bold" fontFamily="Liberation Serif" fill="#3f78b8">A</text></>),
  image: s18(<><rect x="1" y="1" width="14" height="15" fill="#fff" stroke="#888" /><path d="M2 15L6 8L9 15Z" fill="#b5c9e2" /><circle cx="11" cy="5" r="1.800" fill="#e9bf76" /><rect x="9" y="10" width="9" height="6" fill="#fff" stroke="#3f78b8" strokeWidth="1.500" /><path d="M13.500 16V19M11 18.500H16" stroke="#3f78b8" strokeWidth="1.500" /></>),
  shapes: s18(<><rect x="8" y="2" width="9" height="9" stroke="#3f78b8" strokeWidth="1.800" /><circle cx="6" cy="8.500" r="5" fill="#eee" stroke="#3f78b8" strokeWidth="1.800" /><path d="M6 18L11 9.500L16 18Z" fill="#3f78b8" stroke="#eee" /></>),
  measure: s18(Calc),
  column: s18(<><Grid x={2.5} y={3} w={16} h={14} c="#666" rows={2} cols={3} /><rect x="2" y="8" width="6" height="9" fill="#bcd0e8" /><Sun x={5} y={4} r={4} /></>),
  quick: s18(<>{Calc}<path d="M11 5L6 12H9L7 19L14 10H10L12 5Z" fill="#efc277" stroke="#fff" strokeWidth=".5" /></>),
};
const Big = ({ w, icon, a, b, off }) => (
  <BigBtn $w={w} $off={off}><BigIcon>{ICONS[icon]}</BigIcon>
    <Line><Fit w={a[1]}>{a[0]}</Fit></Line>
    {b && <Line>{b[0] && <Fit w={b[1]}>{b[0]}</Fit>}{b[2] && <Caret />}</Line>}
  </BigBtn>
);
const Small = ({ icon, t, w, off, caret, first }) => <SmallBtn $off={off} $first={first}>{SMALL[icon]}<Fit w={w}>{t}</Fit>{caret && <Caret />}</SmallBtn>;
const Label = ({ t, w }) => <GroupLabel><Fit w={w}>{t}</Fit></GroupLabel>;

/* ---------- visual gallery ---------- */
const O = '#e88b3f', B = '#8aadd3', Y = '#e7c07a', N = '#9b9b9b', D = '#3f78b8';
const rc = (x, y, w, h, f) => <rect key={`${x}-${y}-${f}`} x={x} y={y} width={w} height={h} fill={f} />;
const Axis = () => <path d="M.7 0V20.500H21" stroke="#8b8b8b" strokeWidth="1.200" />;
const v = (c, axis) => <Svg w={22} h={22}>{axis && <Axis />}{c}</Svg>;
const VIS = [
  v([rc(1, 3, 5, 6, N), rc(6, 3, 9, 6, O), rc(1, 11, 8, 6, N), rc(9, 11, 9, 6, O)], 1),
  v([rc(4, 5, 5, 10, O), rc(4, 15, 5, 5, N), rc(12, 2, 6, 10, O), rc(12, 12, 6, 8, N)], 1),
  v([rc(1, 2, 12, 4, Y), rc(1, 6, 19, 4, B), rc(1, 12, 16, 4, Y), rc(1, 16, 11, 4, B)], 1),
  v([rc(3, 8, 4, 12, Y), rc(7, 1, 3, 19, B), rc(12, 4, 3, 16, Y), rc(15, 8, 4, 12, B)], 1),
  v([rc(1, 3, 6, 6, N), rc(7, 3, 11, 6, B), rc(1, 11, 9, 6, N), rc(10, 11, 8, 6, B)], 1),
  v([rc(4, 2, 5, 12, B), rc(4, 14, 5, 6, N), rc(12, 2, 5, 11, B), rc(12, 13, 5, 7, N)], 1),
  v(<><path d="M1 17L7 10L12 6L17 10L21 8" stroke="#c98d80" strokeWidth="1.500" /><path d="M1 13L5 10L10 13L15 7L21 13" stroke={D} strokeWidth="1.300" /></>, 1),
  v(<><path d="M1 6L8 5L15 1L21 4V20H1Z" fill="#c8b18c" /><path d="M1 9L8 12L15 7L21 8V20H1Z" fill="#a9cde2" /><path d="M1 14L8 15L14 11L21 15V20H1Z" fill={O} /></>, 1),
  v(<><path d="M1 8L6 3L12 8L18 2L22 6V20H1Z" fill="#efc277" /><path d="M1 11L6 13L12 11L17 15L22 11V20H1Z" fill="#5b86b5" /><path d="M1 20L7 15L12 18L17 14L22 20Z" fill={O} /></>, 1),
  v(<>{rc(4, 4, 5, 16, '#c58b5e')}{rc(11, 9, 5, 11, N)}<path d="M1 15L8 10L14 13L20 8" stroke="#d0603f" /><path d="M20 1V20" stroke="#c07840" strokeWidth="2" /></>, 1),
  v(<>{rc(3, 7, 4, 13, Y)}{rc(6, 2, 4, 18, B)}{rc(12, 5, 4, 15, Y)}{rc(16, 10, 3, 10, B)}<path d="M1 15L8 11L14 14L20 8" stroke="#d0603f" /><path d="M20 1V20" stroke="#e88b3f" strokeWidth="1.500" /></>, 1),
  v(<>{[2, 8, 15].map(x => rc(x, x === 8 ? 7 : 4, 4, x === 8 ? 13 : 16, '#efe0c0'))}<path d="M6 10L8 18M12 8L15 18" stroke={O} strokeWidth="2" />{rc(2, 8, 4, 6, B)}{rc(15, 5, 4, 7, B)}</>, 1),
  v(<>{rc(3, 2, 3, 18, N)}{rc(7, 5, 3, 10, '#b4413a')}{rc(10, 11, 3, 8, N)}{rc(12, 4, 3, 13, '#5d9a84')}{rc(16, 2, 2, 18, '#c8c8c8')}</>, 1),
  v(<>{[[4, 7, '#c5523f'], [8, 13, Y], [14, 6, '#65a18c'], [16, 11, O], [5, 16, D], [15, 16, N], [10, 10, D]].map(([x, y, c]) => <circle key={x} cx={x} cy={y} r="2" fill={c} />)}</>, 1),
  v(<><circle cx="11" cy="10" r="10" fill={B} /><path d="M11 10L11 0A10 10 0 0 0 1.500 8Z" fill="#f0dcc0" /><path d="M11 10L1.500 8A10 10 0 0 0 5 18Z" fill="#e8a196" stroke="#444" strokeWidth=".6" /></>),
  v(<><circle cx="11" cy="10" r="8" stroke={D} strokeWidth="4.500" strokeDasharray="11 1.500" /><path d="M11 2A8 8 0 0 1 18.500 7" stroke={Y} strokeWidth="4.500" /></>),
  v(<><rect x="1" y="0" width="20" height="20" fill="#fff" stroke="#999" />{rc(6, 1, 9, 8, '#b9cde4')}<path d="M1 10H21M6 0V10M15 0V10M11 10V20M1 15H11M11 14H21" stroke="#777" /></>),
  v(<><circle cx="11" cy="10" r="9.500" fill="#fff" stroke="#7fb2c8" strokeWidth="1.500" /><ellipse cx="11" cy="10" rx="4.500" ry="9.500" stroke="#6fb0a5" /><path d="M1 7H21M1 13H21" stroke="#6fb0a5" /></>),
  v(<><path d="M1 2H12L14 8L6 12L1 7Z" fill={N} /><path d="M5 9L14 6L20 9L17 18L8 19Z" fill={B} /><path d="M1 7H9V13L3 11Z" fill={D} /><path d="M17 0H21V12L17 8Z" fill={Y} /></>),
  v([rc(0, 1, 21, 4, B), rc(2, 6, 17, 4, Y), rc(5, 11, 11, 4, B), rc(7, 16, 7, 3, B)]),
  v(<><path d="M2 15A9 9 0 0 1 14 5" stroke={Y} strokeWidth="4" /><path d="M15 6A9 9 0 0 1 20 15" stroke="#65a18c" strokeWidth="4" /><path d="M9 15L15 8L11 16Z" fill="#777" /></>),
  v(<><rect x=".5" y="2" width="20" height="14" fill="#fff" stroke="#999" /><text x="2" y="10.500" fontSize="9" fontFamily="Open Sans" fontWeight="600" fill="#5f93c9" textLength="17">123</text><path d="M3 13.500H18" stroke="#555" /></>),
  v(<><rect x=".5" y="0" width="20" height="20" fill="#fff" stroke="#999" />{rc(2, 2, 3, 17, '#bbb')}{rc(8, 3, 7, 2, D)}{rc(8, 7, 8, 2, B)}{rc(8, 11, 8, 2, B)}</>),
  v(<><rect x=".5" y="3" width="20" height="14" fill="#fff" stroke="#999" /><path d="M4 10L7 5.500L10 10Z" fill="#5d9a84" /><path d="M11 5.500H17L14 10Z" fill="#d0553f" /><path d="M3 13.500H17" stroke="#aaa" /></>),
  v(<>{rc(0, 0, 20, 20, '#fff')}{rc(0, 0, 20, 4, D)}{rc(3, 6, 3, 3, B)}{rc(3, 10, 3, 3, Y)}{rc(3, 14, 3, 3, B)}<path d="M9 10H22L17.500 15V22H14V15Z" fill="#8b8b8b" /></>),
  v(<Grid x={1.5} y={0.5} w={18} h={19} c={D} rows={3} cols={3} />),
  v(<><Grid x={1.5} y={0.5} w={18} h={19} c={D} rows={3} cols={3} />{rc(14, 5, 5, 15, '#cfe0f2')}</>),
  v(<text x="2" y="20" fontSize="27" fontFamily="Open Sans" fontWeight="600" fill="#8aadd3" textLength="17" lengthAdjust="spacingAndGlyphs">R</text>),
  v(<text x="0" y="15.500" fontSize="19" fontFamily="Open Sans" fontWeight="700" fill="#fdf04c" textLength="21" lengthAdjust="spacingAndGlyphs">Py</text>),
  v(<><circle cx="11" cy="10" r="10" fill="#1d6fb5" stroke="#b0b0b0" /><path d="M6 3L10 6L7 10L3 9ZM11 10L16 11L13 17L10 15ZM15 4L19 8L15 8Z" fill="#3dae49" /><path d="M3 5Q11 10 19 5M1 11Q11 15 21 11M8 1Q3 10 9 20M14 1Q19 10 13 20" stroke="#ddd" strokeWidth=".9" /></>),
];

const TableIcon = () => (
  <svg width="17" height="17" viewBox="0 0 17 17"><rect width="17" height="17" fill="#9c9c9c" /><path d="M2 6h3.500v2.500H2zM7 6h3.500v2.500H7zM12 6h3v2.500h-3zM2 9.500h3.500V12H2zM7 9.500h3.500V12H7zM12 9.500h3V12h-3zM2 13h3.500v2.500H2zM7 13h3.500v2.500H7zM12 13h3v2.500h-3z" fill="#fff" /></svg>
);
const SigmaIcon = () => <svg width="13" height="13" viewBox="0 0 13 13"><path d="M11.500 3.500V1H1.500L7 6.500L1.500 12H11.500V9.500" fill="none" stroke="#9b9b9b" strokeWidth="1.500" /></svg>;
const CalIcon = () => <svg width="15" height="16" viewBox="1 0 15 16"><rect y="2" width="15" height="14" fill="#ccc" /><path d="M3 0v3M12 0v3" stroke="#ccc" /><path d="M1 4.500h13M2 7.500h11M2 10.500h11M2 13.500h11M5 6v9M9.500 6v9" stroke="#777" /></svg>;
const Chevron = () => <svg width="9" height="15" viewBox="0 0 9 15"><path d="M1 1L8 7.500L1 14" fill="none" stroke="#ddd" strokeWidth="1.400" /></svg>;

const FIELDS = 'alert|cdi*|code-|depth*|detail|dmin*|event_date_ti...@|event_type|felt*|gap*|geometry.type-|id|ids|latitude*|longitude*|mag*|mag_scaled*|magnitude_type|mmi*|net|nst*|place|rms*|sig*|sources|status|time*-|title|tsunami*|types|tz*-|updated*-|updated_date...@|url'.split('|');

const Kpis = ({ c, rows }) => (
  <Stats $c={c}>{rows.map(([val, w, l, lw]) => <Stat key={l}><StatValue><Fit w={w}>{val}</Fit></StatValue><StatLabel><Fit w={lw}>{l}</Fit></StatLabel></Stat>)}</Stats>
);

export default function App() {
  return (
    <>
      <Global />
      <Desktop>
        <Win>
          <TitleBar>
            <svg width="137" height="26" viewBox="0 0 137 26" fill="none">
              <rect y="3" width="20" height="20" fill="#f2c811" /><path d="M5 16C3 16 3 15 3 13V11C3 9 4 8 6 8H14C16 8 17 9 17 11V15" stroke="#222" strokeWidth="1.300" /><path d="M7 14V16M9.500 12V18M12 13V18M14.500 11V17" stroke="#222" strokeWidth="1.600" />
              <path d="M27.500 5V22M136 5V22" stroke="#6f8196" />
              <rect x="40" y="6" width="14" height="14" fill="#fff" stroke="#7a4d99" strokeWidth="2" /><rect x="40" y="13" width="14" height="7" fill="#7a4d99" /><rect x="43.500" y="16" width="6" height="4" fill="#fff" />
              <path d="M66 10H75C82 10 82 20 74 20H72M71 5L66 10L71 15" stroke="#3f78b8" strokeWidth="2.800" /><path d="M106 10H97C90 10 90 20 97 20M101 5L106 10L101 15" stroke="#b0c0d2" strokeWidth="2.800" />
              <path d="M117 12h7" stroke="#333" strokeWidth="1.200" /><path d="M117 14h7l-3.500 4z" fill="#333" />
            </svg>
            <Caption><Fit w={267}>USGS Seismic Events - Power BI Desktop</Fit></Caption>
            <WinButtons>
              <WinButton $w={34} $first><svg width="16" height="12" viewBox="0 0 16 12"><rect x="1" y="7" width="14" height="4" fill="#fff" stroke="#4b5b70" /></svg></WinButton>
              <WinButton $w={31}><svg width="16" height="14" viewBox="0 0 16 14"><rect x="5" y="1" width="10" height="8" fill="#fff" stroke="#4b5b70" /><rect x="1" y="4" width="10" height="8" fill="#fff" stroke="#4b5b70" /><rect x="4" y="7" width="4" height="2" fill="#4b5b70" /></svg></WinButton>
              <WinButton $w={58}><svg width="16" height="14" viewBox="0 0 16 14"><path d="M3 2L13 12M13 2L3 12" stroke="#4b5b70" strokeWidth="4.500" /><path d="M3 2L13 12M13 2L3 12" stroke="#fff" strokeWidth="2.600" /></svg></WinButton>
            </WinButtons>
          </TitleBar>
          <TabStrip>
            <FileButton><svg width="19" height="16" viewBox="0 0 19 16"><rect x="1" y="1" width="17" height="14" fill="#fff" /><rect x="1" y="1" width="4" height="14" fill="#bbb" /><path d="M8 4h8M8 7h8M8 10h8" stroke="#555" /></svg><svg width="10" height="6" viewBox="0 0 10 6"><path d="M0 0H10L5 6Z" fill="#fff" /></svg></FileButton>
            <HomeTab><Fit w={34}>Home</Fit></HomeTab>
            <Tab $ml={16}><Fit w={27}>View</Fit></Tab>
            <Tab $ml={30}><Fit w={56}>Modeling</Fit></Tab>
            <Tab $ml={40}><Fit w={27}>Help</Fit></Tab>
            <HelpDot>?</HelpDot>
          </TabStrip>
          <Ribbon>
            <Group $w={177}>
              <GroupBody>
                <Big off w={60} icon="paste" a={['Paste', 31]} />
                <SmallCol $ml={-1}><Small first off icon="cut" t="Cut" w={19} /><Small off icon="copy" t="Copy" w={30} /><Small off icon="paint" t="Format Painter" w={85} /></SmallCol>
              </GroupBody><Label t="Clipboard" w={58} />
            </Group>
            <Group $w={298}>
              <GroupBody $pl={1}>
                <Big w={56} icon="get" a={['Get', 20]} b={['Data', 26, 1]} />
                <Big w={56} icon="recent" a={['Recent', 39]} b={['Sources', 46, 1]} />
                <Big w={54} icon="enter" a={['Enter', 30]} b={['Data', 27]} />
                <Gap $w={2} /><Rule />
                <Big w={67} icon="edit" a={['Edit', 22]} b={['Queries', 45, 1]} />
                <Rule />
                <Big w={56} icon="refresh" a={['Refresh', 44]} />
              </GroupBody><Label t="External data" w={76} />
            </Group>
            <Group $w={301}>
              <GroupBody $pl={4}>
                <Big w={50} icon="newpage" a={['New', 26]} b={['Page', 29, 1]} />
                <Big w={50} icon="newvis" a={['New', 26]} b={['Visual', 34]} />
                <Big w={58} icon="ask" a={['Ask A', 33]} b={['Question', 52]} />
                <Big w={49} icon="buttons" a={['Buttons', 43]} b={['', 0, 1]} />
                <SmallCol $ml={4}><Small first icon="text" t="Text box" w={50} /><Small icon="image" t="Image" w={36} /><Small icon="shapes" t="Shapes" w={42} caret /></SmallCol>
              </GroupBody><Label t="Insert" w={33} />
            </Group>
            <Group $w={138}>
              <GroupBody $pl={5}><Big w={76} icon="market" a={['From', 30]} b={['Marketplace', 71]} /><Big w={50} icon="file" a={['From', 30]} b={['File', 19]} /></GroupBody><Label t="Custom visuals" w={86} />
            </Group>
            <Group $w={65}><GroupBody $pl={3}><Big w={58} icon="theme" a={['Switch', 37]} b={['Theme', 39, 1]} /></GroupBody><Label t="Themes" w={44} /></Group>
            <Group $w={93}><GroupBody $pl={2}><Big w={86} icon="manage" a={['Manage', 48]} b={['Relationships', 77]} /></GroupBody><Label t="Relationships" w={77} /></Group>
            <Group $w={158}>
              <GroupBody $pl={0}><SmallCol $ml={8}><Small first icon="measure" t="New Measure" w={81} /><Small icon="column" t="New Column" w={74} /><Small icon="quick" t="New Quick Measure" w={117} /></SmallCol></GroupBody><Label t="Calculations" w={69} />
            </Group>
            <Group $w={61}><GroupBody $pl={0}><Big w={58} icon="publish" a={['Publish', 41]} /></GroupBody><Label t="Share" w={33} /></Group>
          </Ribbon>
          <Work>
            <NavRail>
              <RailItem $on><svg width="25" height="24" viewBox="0 0 25 24"><rect x="1" y="1" width="23" height="22" fill="none" stroke="#ddd" strokeWidth="1.500" /><path d="M5 10V21M12 15V21M18 7V21" stroke="#fff" strokeWidth="4" /></svg></RailItem>
              <RailItem><svg width="25" height="25" viewBox="0 0 25 25"><rect x="1" y="1" width="23" height="23" fill="none" stroke="#777" strokeWidth="1.500" /><rect x="0" y="0" width="25" height="6" fill="#777" /><path d="M1 12H24M1 18H24M8.500 6V24M16.500 6V24" stroke="#777" strokeWidth="1.500" /></svg></RailItem>
              <RailItem><svg width="25" height="25" viewBox="0 0 25 25" fill="none"><path d="M.8 8H9.500V17H.8ZM14.500 2H24V11H14.500ZM9.500 12L14.500 9" stroke="#777" strokeWidth="1.500" /><path d="M.8 8H9.500M14.500 3H24" stroke="#777" strokeWidth="3" /><circle cx="18" cy="18" r="2.500" stroke="#777" strokeWidth="1.500" /><path d="M18 12.500V15M18 21V23.500M12.500 18H15M21 18H23.500" stroke="#777" strokeWidth="1.500" /></svg></RailItem>
            </NavRail>
            <Center>
              <Canvas>
                <PageGuide>
                  <Report>
                    <ReportTitle><Fit w={1069}>U.S. Geological Survey - Recent Seismic Events</Fit></ReportTitle>
                    <ReportBody>
                      <MapCard>
                        <MapTitle><Fit w={263}>Recent Seismic Events</Fit></MapTitle>
                        <MapFrame>
                          <WorldMap />
                          <Player>
                            <Slider />
                            <PlayerTimes><Fit w={172}>5/15/2019 11:28:27 AM</Fit><Gap $w={90} /><Fit w={353}>5/15/2019 11:28:27 AM - 6/15/2019 5:10:52 AM</Fit><Gap $w={65} /><Fit w={163}>6/15/2019 5:10:52 AM</Fit></PlayerTimes>
                          </Player>
                          <Attribution><Fit w={113}>Esri, FAO, NOAA</Fit></Attribution>
                          <Esri />
                        </MapFrame>
                      </MapCard>
                      <Side>
                        <CardRow>
                          <Card $h={124} $bg="#73a391" $pt={12.5}><CardTitle $s={24.5}><Fit w={228}>Seismic Event Period</Fit></CardTitle><CardValue $s={48} $lh={79} $pl={35}><Fit w={252}>Past Month</Fit></CardValue></Card>
                          <Card $h={124} $bg="#73a391" $pt={12.5}><CardTitle $s={24.5}><Fit w={161}>Last Refreshed</Fit></CardTitle><CardValue $s={31} $lh={71} $pl={9}><Fit w={303}>6/14/2019 5:31:34 PM</Fit></CardValue></Card>
                        </CardRow>
                        <CardRow>
                          <Card $h={327} $bg="#c3b2c4" $pt={10}><CardTitle $s={23.5}><Fit w={267}>Earthquake Seismic Events</Fit></CardTitle>
                            <Kpis c="#4f3157" rows={[['10440', 57, 'Number of Seismic Events', 216], ['8.00', 38, 'Maximum Magnitude', 179], ['1.38', 38, 'Average Magnitude', 164], ['-1.25', 46, 'Minimum Magnitude', 176]]} /></Card>
                          <Card $h={327} $bg="#a9bdd7" $pt={10}><CardTitle $s={23.5}><Fit w={295}>Non-Earthquake Seismic Ev...</Fit></CardTitle>
                            <Kpis c="#274a78" rows={[['273', 34, 'Number of Seismic Events', 216], ['3.10', 38, 'Maximum Magnitude', 179], ['1.55', 38, 'Average Magnitude', 164], ['0.58', 38, 'Minimum Magnitude', 176]]} /></Card>
                        </CardRow>
                        <TreeCard>
                          <TreeTitle><Fit w={462}>Categories of Non-Earthquake Seismic Events</Fit></TreeTitle>
                          <Tree>
                            <Cell $c="#4a8edd" $tall><Fit w={109}>quarry blast</Fit><Fit w={34}>104</Fit></Cell>
                            <Cell $c="#744a78"><Fit w={88}>explosion</Fit><Fit w={22}>72</Fit></Cell>
                            <Cell $c="#f4ca16" $tall><Fit w={106}>other event</Fit><Fit w={22}>46</Fit></Cell>
                            <Cell $c="#4c5d8a"><Fit w={87}>ice quake</Fit><Fit w={21}>51</Fit></Cell>
                          </Tree>
                        </TreeCard>
                      </Side>
                    </ReportBody>
                    <Foot><Fit w={324}>Reference - U.S. Geological Survey:</Fit><Gap $w={5} /><Link><Fit w={593}>https://earthquake.usgs.gov/earthquakes/feed/v1.0/geojson.php</Fit></Link><Gap $w={715} /><Fit w={204}>Jeffery Brown (c) 2019</Fit></Foot>
                  </Report>
                </PageGuide>
              </Canvas>
              <PageBar>
                <PageArrows><Tri $left $c="#c4c4c4" /><Tri $c="#c4c4c4" /></PageArrows>
                <PageTab><Fit w={99}>Seismic Events</Fit></PageTab>
                <AddPage><svg width="15" height="15" viewBox="0 0 15 15"><path d="M7.500 0V15M0 7.500H15" stroke="#777" strokeWidth="3" /></svg></AddPage>
              </PageBar>
            </Center>
            <Pane $w={227}>
              <PaneHead $pr={16}><Fit w={135}>VISUALIZATIONS</Fit><Chevron /></PaneHead>
              <IconGrid>{VIS.map((x, i) => <div key={i}>{x}</div>)}</IconGrid>
              <More><i /><i /><i /></More>
              <WellTabs>
                <WellTab $on><svg width="26" height="26" viewBox="0 0 26 26" fill="none" stroke="#fff"><path d="M1 1.500H20" strokeWidth="1.400" /><rect x="1" y="5" width="24" height="8" strokeWidth="1.300" strokeDasharray="2 1" /><rect x="1" y="16" width="24" height="8" strokeWidth="1.300" strokeDasharray="2 1" /></svg></WellTab>
                <WellTab><svg width="24" height="26" viewBox="0 0 24 26" fill="none" stroke="#fff" strokeWidth="1.400"><rect x="1" y="1" width="18" height="6" rx="1" /><path d="M19 4H23V10H11V13" /><rect x="8.500" y="13" width="5" height="12" /></svg></WellTab>
              </WellTabs>
              <PaneLabel $h={35} $pl={15}><Fit w={43}>Values</Fit></PaneLabel>
              <Well $h={35} $mb={5} $pl={12}><Fit w={134}>Add data fields here</Fit></Well>
              <SubHead><Fit w={69}>FILTERS</Fit></SubHead>
              <PaneLabel $h={39} $pt={4} $pl={20}><Fit w={108}>Page level filters</Fit></PaneLabel>
              <Well $h={33} $pl={10}><Fit w={134}>Add data fields here</Fit></Well>
              <PaneLabel $h={35} $pl={20}><Fit w={120}>Report level filters</Fit></PaneLabel>
              <Well $h={32} $mb={5} $pl={10}><Fit w={134}>Add data fields here</Fit></Well>
              <SubHead><Fit w={128}>DRILLTHROUGH</Fit></SubHead>
              <PaneLabel $h={42} $pl={11}><Fit w={83}>Cross-report</Fit></PaneLabel>
              <PaneLabel $h={18} $pl={16}><Fit w={21}>Off</Fit><svg width="38" height="16" viewBox="0 0 38 16" fill="none" stroke="#fff"><circle cx="7.500" cy="8" r="6" strokeWidth="3" /><path d="M15 7H37V9H15" /></svg></PaneLabel>
              <PaneLabel $h={56} $pl={11}><Fit w={93}>Keep all filters</Fit></PaneLabel>
              <PaneLabel $h={6} $pl={16}><Fit w={20}>On</Fit><svg width="38" height="16" viewBox="0 0 38 16"><path d="M0 8H24" stroke="#fff" strokeWidth="2" /><circle cx="29.500" cy="8" r="7.500" fill="#fff" /></svg></PaneLabel>
              <PaneLabel $h={16} $pl={0} />
              <Well $h={33} $pl={10}><Fit w={182}>Add drillthrough fields here</Fit></Well>
            </Pane>
            <Pane $w={220}>
              <PaneHead $pr={11}><Fit w={59}>FIELDS</Fit><Chevron /></PaneHead>
              <Search><svg width="19" height="19" viewBox="0 0 19 19" fill="none" stroke="#aaa" strokeWidth="1.400"><circle cx="12" cy="7" r="6" /><path d="M7.500 11.500L0 18.500" /></svg><Fit w={48}>Search</Fit></Search>
              <FieldsBody>
                <TableRow><TableArrow><Tri $c="#a8a8a8" /></TableArrow><TableIcon /><Fit w={98}>Last_Refreshed</Fit></TableRow>
                <TableRow><TableArrow $open><svg width="8" height="8" viewBox="0 0 8 8"><path d="M8 0V8H0Z" fill="#a8a8a8" /></svg></TableArrow><TableIcon /><Fit w={97}>seismic_events</Fit></TableRow>
                <FieldList>
                  {FIELDS.map(f => {
                    const name = f.replace(/[*@-]/g, '');
                    return (
                      <Field key={f} $dim={f.includes('-')}>
                        <FieldArrow>{f.includes('@') && <Tri $c="#a8a8a8" />}</FieldArrow><Box />
                        <Kind>{f.includes('*') && <SigmaIcon />}{f.includes('@') && <CalIcon />}</Kind>{name}
                      </Field>
                    );
                  })}
                </FieldList>
                <TableRow><TableArrow><Tri $c="#a8a8a8" /></TableArrow><TableIcon /><Fit w={131}>USGS_Query_Period</Fit></TableRow>
                <Thumb />
              </FieldsBody>
            </Pane>
          </Work>
          <Status><Fit w={75}>PAGE 1 OF 1</Fit></Status>
          <Glass />
          <Taskbar>
            <Task $plain $w={64}><Chip $c="#7fb4d8" $w={26} $r="50%" $mt={4} $ml={12} /></Task>
            <Task $w={158} $ml={8}><Chip $c="#8cc84b" $w={19} /><span>Sticky Notes</span></Task>
            <Task $plain $w={46} $ml={12}><Chip $c="#d8e8f2" $w={14} /></Task>
            <Task $plain $w={42}><Chip $c="#e0731d" $w={18} /></Task>
            <Task $w={156} $ml={5}><Chip $c="#e8d57c" $w={14} /><span>Power BI Exercis...</span></Task>
            <Task $plain $w={50} $ml={10}><Chip $c="#80397b">N</Chip></Task>
            <Task $plain $w={50}><Chip $c="#2b5797">W</Chip></Task>
            <Task $plain $w={50}><Chip $c="#d24726">P</Chip></Task>
            <Task $w={158} $ml={-2}><Chip $c="#e5702a" $w={16} $r="50%" /><span>Insert copyright...</span></Task>
            <Task $plain $w={50} $ml={8}><Chip $c="#e2483d" $r="50%" /></Task>
            <Task $w={156}><Chip $c="#1072c4" $w={18}>O</Chip><span>5G AT&amp;T - jeff...</span></Task>
            <Task $w={158} $ml={3}><Chip $c="#1072c4" $w={18}>O</Chip><span>Calendar - jeff.b...</span></Task>
            <Task $plain $w={46} $ml={8}><Chip $c="#207245">X</Chip></Task>
            <Task $w={158} $ml={-6}><Chip $c="#2f6fc4" $w={16} $r="50%" /><span>Shimali Agarwal...</span></Task>
            <Task $w={158} $ml={5}><Chip $c="#e9b71e" $w={18} $r="50%" /><span>SEP - Active Sca...</span></Task>
            <Task $w={158} $ml={4}><Chip $c="#c9cfd2" $w={16} $r="50%" /><span>Resource Monit...</span></Task>
            <Task $on $w={158} $ml={4}><Chip $c="#f2c811" $w={18} /><span>USGS Seismic E...</span></Task>
            <Gap $w={418} />
            <Chip $c="#2fb0e0" $w={20} $r="50%" /><Gap $w={12} /><Chip $c="#0a5fc0" $w={15} $mt={3} $r="5px" /><Gap $w={15} /><Chip $c="#0a7a14" $w={14} /><Gap $w={13} /><Chip $c="#6aa818" $w={14} $mt={3} /><Gap $w={17} /><Chip $c="#b8c9ba" $w={18} $r="50%" />
            <Gap $w={36} /><span>5:32 PM</span>
          </Taskbar>
        </Win>
        <Edge />
      </Desktop>
    </>
  );
}
